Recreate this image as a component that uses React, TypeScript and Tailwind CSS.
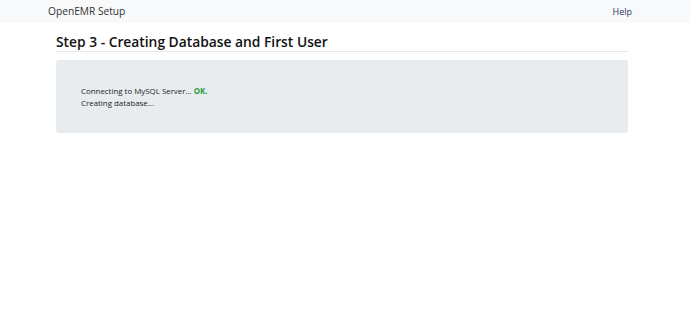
export default function App() {
  return (
    <div className="min-h-[331px] bg-white font-['Open_Sans','Noto_Sans',sans-serif] text-[#212529]">
      <nav className="h-[23px] bg-[#f8f9fa]">
        <div className="ml-[48px] flex h-full w-[592px] items-center justify-between">
          <span className="text-[10.2px] text-[#333]">OpenEMR Setup</span>
          <a className="pr-[8px] text-[9px] text-[#2c4058]">Help</a>
        </div>
      </nav>
      <main className="ml-[56px] w-[572px]">
        <h2 className="mt-[11px] border-b border-[#e5e7ea] pb-[1px] text-[13.8px] font-semibold leading-[16px] text-[#111]">
          Step 3 - Creating Database and First User
        </h2>
        <div className="mt-[8px] h-[73px] rounded-[3px] bg-[#e9ecef] pl-[25px] pt-[25px] text-[7.9px] leading-[12px] text-[#222]">
          <p>
            Connecting to MySQL Server... <span className="font-bold text-[#1e9e3a]">OK.</span>
          </p>
          <p>Creating database...</p>
        </div>
      </main>
    </div>
  );
}
